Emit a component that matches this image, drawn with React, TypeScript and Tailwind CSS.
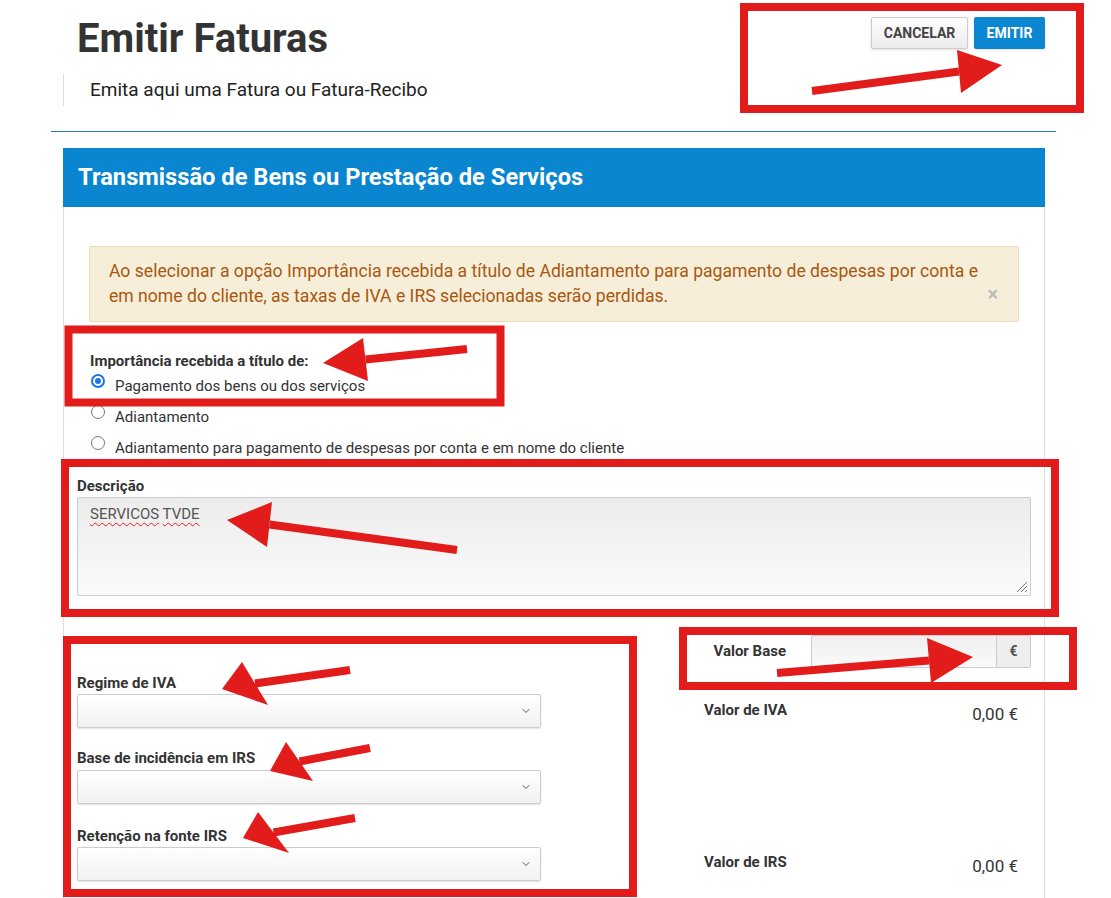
import React from 'react';
import { ChevronDown } from 'lucide-react';

const RED = '#e21b1b';

const arrows = [
  { start: [812, 91], tip: [1002, 65], b1: [957, 50], b2: [961, 93] },
  { start: [467, 349], tip: [323, 363], b1: [363, 338], b2: [368, 381] },
  { start: [457, 550], tip: [227, 520], b1: [272, 502], b2: [267, 547] },
  { start: [350, 670], tip: [222, 689], b1: [242, 662], b2: [268, 705] },
  { start: [370, 748], tip: [270, 771], b1: [286, 742], b2: [313, 781] },
  { start: [355, 818], tip: [243, 838], b1: [258, 812], b2: [289, 853] },
  { start: [777, 673], tip: [973, 657], b1: [927, 638], b2: [931, 683] },
];

const boxes = [
  { x: 744, y: 7, w: 336, h: 102 },
  { x: 68.5, y: 329.5, w: 432, h: 73 },
  { x: 65, y: 463, w: 990, h: 150 },
  { x: 67, y: 640, w: 566, h: 253 },
  { x: 683, y: 631, w: 390, h: 55 },
];

// red markup drawn over the page
const Annotations = () => (
  <svg className="absolute left-0 top-0 pointer-events-none" width={1111} height={898}>
    {boxes.map((b, i) => (
      <rect key={i} x={b.x} y={b.y} width={b.w} height={b.h} fill="none" stroke={RED} strokeWidth={8} />
    ))}
    {arrows.map((a, i) => {
      const mid = [(a.b1[0] + a.b2[0]) / 2, (a.b1[1] + a.b2[1]) / 2];
      return (
        <g key={i}>
          <line x1={a.start[0]} y1={a.start[1]} x2={mid[0]} y2={mid[1]} stroke={RED} strokeWidth={8} />
          <polygon points={`${a.tip.join(',')} ${a.b1.join(',')} ${a.b2.join(',')}`} fill={RED} />
        </g>
      );
    })}
  </svg>
);

const Radio = ({ checked, label }: { checked?: boolean; label: string }) => (
  <div className="flex h-[31px] items-start pl-[1px]">
    {checked ? (
      <span className="mt-[3px] flex h-[14px] w-[14px] items-center justify-center rounded-full border-2 border-[#1a73e8] bg-white">
        <span className="h-[6px] w-[6px] rounded-full bg-[#1a73e8]" />
      </span>
    ) : (
      <span className="mt-[3px] h-[14px] w-[14px] rounded-full border border-[#767676] bg-white" />
    )}
    <span className="ml-[10px] text-[15px] leading-[31px] text-[#333]">{label}</span>
  </div>
);

const Select = () => (
  <div className="flex h-[34px] w-[464px] items-center justify-end rounded-[2px] border border-[#ccc] bg-gradient-to-b from-white to-[#f1f1f1] pr-[8px] shadow-[0_1px_2px_rgba(0,0,0,0.12)]">
    <ChevronDown className="h-[12px] w-[12px] text-[#555]" strokeWidth={2} />
  </div>
);

export default function App() {
  return (
    <div className="relative h-[898px] w-[1111px] overflow-hidden bg-white font-['Roboto',sans-serif] text-[#333]">
      <div className="ml-[51px] w-[1005px]">
        <div className="flex items-start justify-between">
          <h1 className="mt-[15px] pl-[26px] text-[40px] font-bold leading-[48px] text-[#333]">Emitir Faturas</h1>
          <div className="mt-[17px] flex gap-[6px] pr-[11px]">
            <button className="h-[32px] w-[97px] rounded-[2px] border border-[#ccc] bg-gradient-to-b from-white to-[#ececec] text-[14px] font-bold text-[#444] shadow-sm">
              CANCELAR
            </button>
            <button className="h-[32px] w-[71px] rounded-[2px] bg-[#0b86d1] text-[14px] font-bold text-white shadow-sm">
              EMITIR
            </button>
          </div>
        </div>
        <div className="ml-[12px] mt-[11px] flex h-[32px] items-center border-l border-[#ddd] pl-[26px] text-[19px] text-[#222]">
          Emita aqui uma Fatura ou Fatura-Recibo
        </div>
        <div className="mt-[25px] h-px bg-[#2a7fa0]" />
      </div>

      <div className="ml-[63px] mt-[16px] w-[982px]">
        <div className="flex h-[59px] items-center bg-[#0a85cf] pl-[15px] text-[23.7px] font-bold text-white">
          Transmissão de Bens ou Prestação de Serviços
        </div>
        <div className="border-x border-[#ddd] px-[13px] pb-[30px] pt-[39px]">
          <div className="relative mx-[12px] h-[76px] rounded-[2px] border border-[#ecdcb6] bg-[#f6eed9] py-[12px] pl-[19px] text-[17.6px] leading-[25px] text-[#a9570e]">
            <p className="w-[870px]">
              Ao selecionar a opção Importância recebida a título de Adiantamento para pagamento de despesas por conta e
              em nome do cliente, as taxas de IVA e IRS selecionadas serão perdidas.
            </p>
            <span className="absolute right-[20px] top-[37px] text-[20px] font-bold leading-[20px] text-[#bbb]">×</span>
          </div>

          <div className="ml-[13px] mt-[29px]">
            <div className="text-[15px] font-bold leading-[20px] text-[#333]">Importância recebida a título de:</div>
            <Radio checked label="Pagamento dos bens ou dos serviços" />
            <Radio label="Adiantamento" />
            <Radio label="Adiantamento para pagamento de despesas por conta e em nome do cliente" />
          </div>

          <div className="mt-[12px] text-[15px] font-bold leading-[20px]">Descrição</div>
          <div className="relative mt-[1px] h-[99px] rounded-[2px] border border-[#ccc] bg-gradient-to-b from-[#ececec] to-[#fbfbfb] pl-[12px] pt-[5px] text-[15px] text-[#555]">
            <span className="underline decoration-wavy decoration-[#e02020] decoration-1 underline-offset-[3px]">SERVICOS</span>{' '}
            <span className="underline decoration-wavy decoration-[#e02020] decoration-1 underline-offset-[3px]">TVDE</span>
            <svg className="absolute bottom-[2px] right-[2px]" width="12" height="12" viewBox="0 0 12 12">
              <line x1="11" y1="1" x2="1" y2="11" stroke="#777" strokeWidth="1" />
              <line x1="11" y1="5" x2="5" y2="11" stroke="#777" strokeWidth="1" />
              <line x1="11" y1="9" x2="9" y2="11" stroke="#777" strokeWidth="1" />
            </svg>
          </div>

          <div className="mt-[39px] flex">
            <div className="w-[464px] pt-[38px]">
              <div className="text-[15px] font-bold leading-[20px]">Regime de IVA</div>
              <div className="mt-[1px]"><Select /></div>
              <div className="mt-[20px] text-[15px] font-bold leading-[20px]">Base de incidência em IRS</div>
              <div className="mt-[2px]"><Select /></div>
              <div className="mt-[22px] text-[15px] font-bold leading-[20px]">Retenção na fonte IRS</div>
              <div className="mt-[1px]"><Select /></div>
            </div>
            <div className="ml-auto w-[341px]">
              <div className="flex h-[33px] items-center">
                <div className="w-[121px] pr-[25px] text-right text-[15px] font-bold">Valor Base</div>
                <div className="h-full flex-1 rounded-l-[2px] border border-[#ccc] bg-gradient-to-b from-[#efefef] to-[#fafafa]" />
                <div className="flex h-full w-[34px] items-center justify-center rounded-r-[2px] border border-l-0 border-[#ccc] bg-[#eee] text-[14px] font-bold text-[#555]">
                  €
                </div>
              </div>
              <div className="mt-[32px] flex items-start justify-between pl-[14px] pr-[13px]">
                <div className="text-[15px] font-bold leading-[20px]">Valor de IVA</div>
                <div className="mt-[2px] text-[17px] leading-[24px] text-[#333]">0,00 €</div>
              </div>
              <div className="mt-[126px] flex items-start justify-between pl-[14px] pr-[13px]">
                <div className="text-[15px] font-bold leading-[20px]">Valor de IRS</div>
                <div className="mt-[2px] text-[17px] leading-[24px] text-[#333]">0,00 €</div>
              </div>
            </div>
          </div>
        </div>
      </div>

      <Annotations />
    </div>
  );
}
